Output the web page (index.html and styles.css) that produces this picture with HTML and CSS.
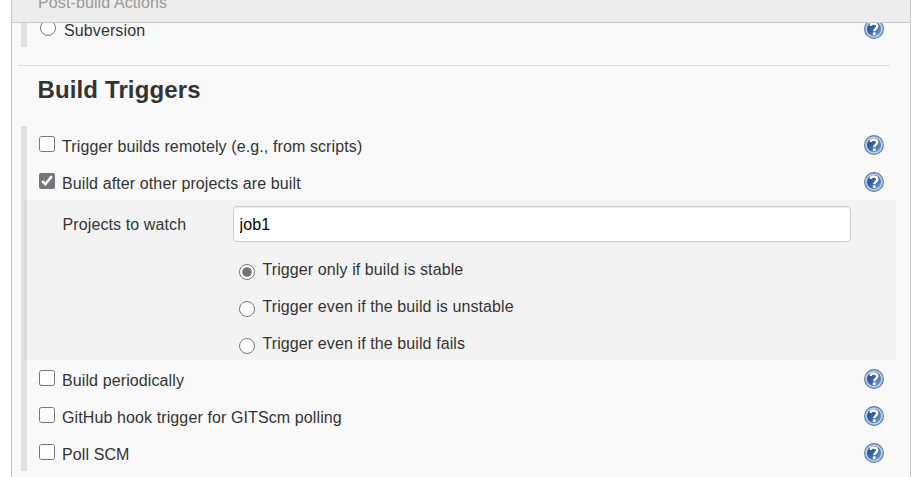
FILE: index.html
```html
<!DOCTYPE html>
<html lang="en">
<head>
<meta charset="utf-8">
<title>Build Triggers</title>
<link rel="stylesheet" href="styles.css">
</head>
<body>
<svg class="defs" width="0" height="0">
  <defs>
    <linearGradient id="disc" x1="0" y1="0" x2="1" y2="1">
      <stop offset="0.1" stop-color="#1f4b90"/>
      <stop offset="0.5" stop-color="#3c68a8"/>
      <stop offset="1" stop-color="#7ba3d3"/>
    </linearGradient>
    <symbol id="help" viewBox="0 0 20 20">
      <circle cx="10" cy="10" r="9.4" fill="#bccbe1" stroke="#587bb0" stroke-width="1.1"/>
      <circle cx="10" cy="10" r="7" fill="url(#disc)"/>
      <path d="M6.9 6.9V5.3C9.4 3.9 13.3 4.5 13.3 7.3C13.3 9.6 10.4 9.7 10.2 12.2" fill="none" stroke="#fff" stroke-width="2.4"/>
      <rect x="8.9" y="13.4" width="2.7" height="2.6" fill="#fff"/>
    </symbol>
  </defs>
</svg>
<main class="panel">
  <header class="tabs"><span>Post-build Actions</span></header>
  <section class="group scm">
    <div class="row"><input type="radio" name="scm"><label>Subversion</label><svg class="help"><use href="#help"/></svg></div>
  </section>
  <h2>Build Triggers</h2>
  <section class="group triggers">
    <div class="row"><input type="checkbox"><label>Trigger builds remotely (e.g., from scripts)</label><svg class="help"><use href="#help"/></svg></div>
    <div class="row"><input type="checkbox" checked><label>Build after other projects are built</label><svg class="help"><use href="#help"/></svg></div>
    <div class="nested">
      <div class="field"><label>Projects to watch</label><input type="text" value="job1"></div>
      <div class="option"><input type="radio" name="threshold" checked><label>Trigger only if build is stable</label></div>
      <div class="option"><input type="radio" name="threshold"><label>Trigger even if the build is unstable</label></div>
      <div class="option"><input type="radio" name="threshold"><label>Trigger even if the build fails</label></div>
    </div>
    <div class="row"><input type="checkbox"><label>Build periodically</label><svg class="help"><use href="#help"/></svg></div>
    <div class="row"><input type="checkbox"><label>GitHub hook trigger for GITScm polling</label><svg class="help"><use href="#help"/></svg></div>
    <div class="row"><input type="checkbox"><label>Poll SCM</label><svg class="help"><use href="#help"/></svg></div>
  </section>
</main>
</body>
</html>
```
FILE: styles.css
```css
* { box-sizing: border-box; }
body {
  margin: 0;
  height: 477px;
  overflow: hidden;
  background: #fff;
  color: #333;
  font: 16px/20px "Liberation Sans", Arial, sans-serif;
  letter-spacing: 0.11px;
}
.defs { display: block; }
.panel {
  width: 900px;
  height: 477px;
  margin-left: 11px;
  overflow: hidden;
  background: #f9f9f9;
  border: solid #c9c9c9;
  border-width: 0 1px;
}
.tabs {
  display: flex;
  align-items: flex-end;
  height: 23px;
  padding: 0 0 9px 26px;
  overflow: hidden;
  background: #ededed;
  border-bottom: 1px solid #c8c8c8;
  color: #999;
}
.group { margin-left: 9px; border-left: 6px solid #e0e0e0; }
.scm { height: 24px; overflow: hidden; }
.scm .row { margin-top: -13px; }
.scm .row label { margin-left: 8px; }
.scm .row input { margin-left: 13px; }
h2 {
  width: 872px;
  height: 61px;
  margin: 18px 0 0 6px;
  padding: 9px 0 0 19.5px;
  border-top: 1px solid #dcdcdc;
  font-size: 24px;
  line-height: 29px;
  letter-spacing: 0.13px;
}
.row {
  display: flex;
  align-items: flex-start;
  width: 857px;
  height: 37px;
}
input[type="checkbox"], input[type="radio"] {
  flex: none;
  width: 16px;
  height: 16px;
  margin: 10px 0 0 12px;
  accent-color: #767676;
}
.row label { margin: 11px 0 0 7px; }
.help { width: 20px; height: 20px; margin: 9px 0 0 auto; }
.nested {
  width: 872px;
  height: 160px;
  margin-left: -3px;
  padding: 6px 0 0 38px;
  background: rgba(0, 0, 0, 0.025);
}
.field { display: flex; height: 45px; }
.field label { width: 171px; margin-top: 9px; padding-left: 0.5px; }
.field input {
  width: 618px;
  height: 36px;
  padding: 2px 5.5px 0;
  border: 1px solid #ccc;
  border-radius: 4px;
  background: #fff;
  box-shadow: inset 0 1px 1px rgba(0, 0, 0, 0.075);
  color: #000;
  font: inherit;
  letter-spacing: 0.11px;
}
.option { display: flex; height: 37px; padding-left: 177px; letter-spacing: 0.1px; }
.option input[type="radio"] { margin: 13px 0 0; }
.option label { margin: 9px 0 0 7.5px; }
```
